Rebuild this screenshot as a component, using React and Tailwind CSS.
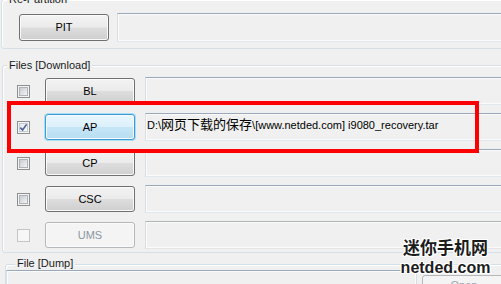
const F = "font-['Liberation_Sans',Arial,sans-serif]";

function Group({ label, className, labelClass, children }) {
  return (
    <div
      className={`border border-[#d5dfe5] rounded-[3px] shadow-[inset_1px_1px_0_#ffffff] ${className}`}
    >
      <div className={`w-fit px-[2px] bg-[#f0f0f0] leading-[13px] ${labelClass}`}>{label}</div>
      {children}
    </div>
  );
}

function Field({ disabled, className = "", children }) {
  const b = disabled
    ? "border-t-[#adb2b5] border-x-[#dadcdf] border-b-[#e3e5e8]"
    : "border-t-[#9aa9ba] border-x-[#d8dee6] border-b-[#e0e7ee]";
  return (
    <div
      className={`border ${b} shadow-[inset_0_0_0_1px_#fbfbfb] bg-[#f0f0f0] ${className}`}
    >
      {children}
    </div>
  );
}

function Btn({ label, variant = "normal", className = "" }) {
  const v =
    variant === "active"
      ? "border-[#3c9ad4] bg-[linear-gradient(#eaf6fd_0%,#dcf1fc_48%,#c6e6f7_52%,#b7dcf1_100%)] shadow-[inset_0_0_0_1px_#f4fbff,0_0_0_1px_#a9dcf5] text-black"
      : variant === "disabled"
      ? "border-[#b4b8bb] bg-[#f4f4f4] text-[#8a96a3] shadow-[inset_0_0_0_1px_#fbfbfb]"
      : "border-[#707070] bg-[linear-gradient(#f3f3f3_0%,#ebebeb_48%,#dddddd_52%,#cfcfcf_100%)] text-black shadow-[inset_0_0_0_1px_#fafafa]";
  return (
    <div
      className={`shrink-0 rounded-[3px] border flex items-center justify-center text-[11px] leading-[13px] ${v} ${className}`}
    >
      {label}
    </div>
  );
}

function Checkbox({ checked, disabled }) {
  if (disabled) {
    return (
      <div className="w-[13px] h-[13px] shrink-0 border border-[#c3c6c9] bg-[#f6f6f6]" />
    );
  }
  return (
    <div className="w-[13px] h-[13px] shrink-0 border border-[#8e8f8f] bg-[#f4f4f4] p-[1px]">
      <div
        className={`w-full h-full border ${
          checked
            ? "border-[#c4cad2] bg-[linear-gradient(135deg,#e6e9ed,#f9f9f9)]"
            : "border-[#aeb3b9] bg-[linear-gradient(135deg,#c8ccd1,#f3f3f3)]"
        }`}
      >
        {checked && (
          <svg width="7" height="7" viewBox="0 0 7 7" className="overflow-visible">
            <path
              d="M0.3 3.6 L2.6 6 L6.6 0.4"
              fill="none"
              stroke="#4a5f97"
              strokeWidth="1.6"
            />
          </svg>
        )}
      </div>
    </div>
  );
}

function Row({ label, checked, variant, disabled, children }) {
  return (
    <div className="flex items-center h-[28px] pl-[14px]">
      <Checkbox checked={checked} disabled={disabled} />
      <Btn label={label} variant={variant} className="ml-[15px] w-[90px] h-[26px]" />
      <Field disabled={disabled} className="ml-[10px] flex-1 h-[28px]">
        {children}
      </Field>
    </div>
  );
}

export default function App() {
  return (
    <div
      className={`relative w-[501px] h-[284px] overflow-hidden bg-[#f0f0f0] text-[11px] leading-[13px] text-[#1a1a1a] ${F}`}
    >
      <div className="w-[640px] flex flex-col -mt-[1px]">
        <Group label="Re-Partition" className="ml-[1px]" labelClass="-mt-[7px] ml-[5px]">
          <div className="mt-[7px] mb-[6px] pl-[17px] flex items-center h-[29px]">
            <Btn label="PIT" className="w-[90px] h-[27px]" />
            <Field className="ml-[8px] flex-1 h-[29px]" />
          </div>
        </Group>

        <Group
          label="Files [Download]"
          className="ml-[2px] mt-[16px]"
          labelClass="-mt-[7px] ml-[4px]"
        >
          <div className="mt-[5px] mb-[3px] flex flex-col gap-[8px]">
            <Row label="BL" />
            <Row label="AP" checked variant="active">
              <div className="pl-[1px] pt-[3px] whitespace-nowrap text-black leading-[13px]">
                D:\
                <span className="text-[13px] font-['Noto_Sans_CJK_SC',sans-serif]">
                  网页下载的保存
                </span>
                \[www.netded.com] i9080_recovery.tar
              </div>
            </Row>
            <Row label="CP" />
            <Row label="CSC" />
            <Row label="UMS" variant="disabled" disabled />
          </div>
        </Group>

        <Group label="File [Dump]" className="ml-[5px] mt-[11px]" labelClass="-mt-[8px] ml-[9px]">
          <div className="flex items-start">
            <Field className="w-[411px] h-[30px]" />
            <div className="ml-[5px] mt-[5px] w-[84px] h-[26px] rounded-[3px] border border-[#b4b8bb] bg-[#f4f4f4] text-[#9aa3ad] flex justify-center pt-[3px] leading-[13px]">
              Open
            </div>
          </div>
        </Group>
      </div>

      {/* red annotation box */}
      <div className="absolute left-[7px] top-[101px] w-[472px] h-[52px] border-[4px] border-[#ff0000]" />

      {/* watermark */}
      <div className="absolute left-[402px] top-[238px] w-[87px] flex flex-col items-center gap-[4px] text-[#1c1c1c] [text-shadow:1px_0_0_#fff,-1px_0_0_#fff,0_1px_0_#fff,0_-1px_0_#fff,1px_1px_0_#fff,-1px_-1px_0_#fff,1px_-1px_0_#fff,-1px_1px_0_#fff]">
        <div className="text-[17px] leading-[17px] font-bold font-['Noto_Sans_CJK_SC',sans-serif] whitespace-nowrap">
          迷你手机网
        </div>
        <div className="text-[16px] leading-[17px] font-bold font-['Liberation_Sans',Arial,sans-serif] whitespace-nowrap">
          netded.com
        </div>
      </div>
    </div>
  );
}
